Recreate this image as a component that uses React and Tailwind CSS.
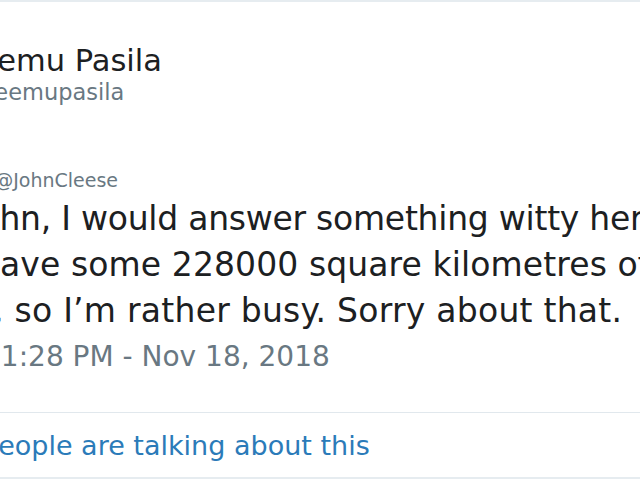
import React from 'react';

const bodyLines = [
  { text: 'John, I would answer something witty here, but I', offset: 'ml-[-30px] tracking-[-0.25px]' },
  { text: 'have some 228000 square kilometres of forest to', offset: 'ml-[-21px] tracking-[0.1px]' },
  { text: 'rake, so I\u2019m rather busy. Sorry about that.', offset: 'ml-[-80px] tracking-[0.25px]' },
];

export default function App() {
  return (
    <div
      className="w-[640px] h-[480px] overflow-hidden bg-white flex flex-col"
      style={{ fontFamily: '"DejaVu Sans", sans-serif' }}
    >
      {/* top edge of the card */}
      <div className="h-[2px] bg-[#e6ecf0] shrink-0" />

      {/* author */}
      <div className="mt-[42px] ml-[-35px] text-[30.5px] leading-[34px] text-[#1c2022] whitespace-nowrap">
        Teemu Pasila
      </div>
      <div className="mt-[1px] ml-[-37px] text-[22.5px] leading-[26px] text-[#697882] whitespace-nowrap">
        @teemupasila
      </div>

      {/* reply context */}
      <div className="mt-[63px] ml-[-119px] text-[19px] leading-[24px] text-[#697882] whitespace-nowrap">
        Replying to @JohnCleese
      </div>

      {/* tweet text */}
      <div className="mt-[4px] flex flex-col text-[33px] leading-[46px] text-[#1c2022]">
        {bodyLines.map((line) => (
          <div key={line.text} className={`${line.offset} whitespace-nowrap`}>
            {line.text}
          </div>
        ))}
      </div>

      {/* timestamp */}
      <div className="mt-[7px] ml-[-17px] text-[28px] leading-[32px] text-[#697882] whitespace-nowrap">
        11:28 PM - Nov 18, 2018
      </div>

      <div className="mt-[39px] h-px bg-[#e1e8ed] shrink-0" />

      {/* footer link */}
      <div className="mt-[17px] ml-[-19px] text-[27px] leading-[32px] text-[#2b7bb9] whitespace-nowrap">
        people are talking about this
      </div>

      <div className="mt-[15px] h-[2px] bg-[#e6ecf0] shrink-0" />
    </div>
  );
}
